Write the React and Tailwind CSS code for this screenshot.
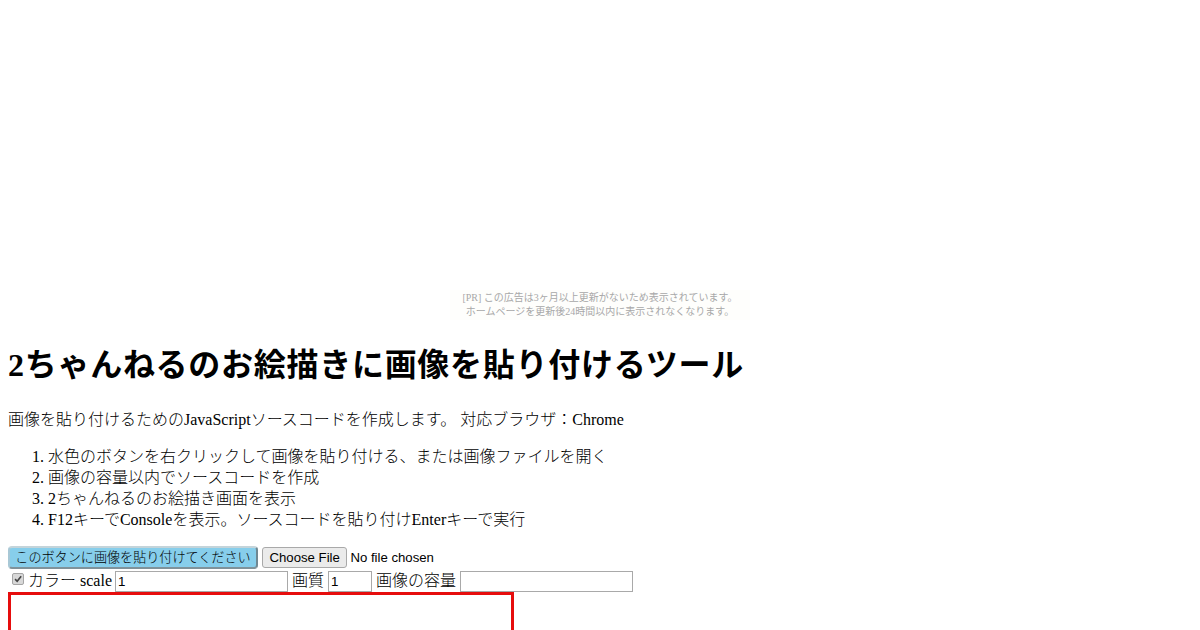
import React from "react"

const serif = "font-['Liberation_Serif','Noto_Sans_CJK_JP',serif]"
const steps = [
  "水色のボタンを右クリックして画像を貼り付ける、または画像ファイルを開く",
  "画像の容量以内でソースコードを作成",
  "2ちゃんねるのお絵描き画面を表示",
  "F12キーでConsoleを表示。ソースコードを貼り付けEnterキーで実行",
]

const Field = ({ className, value }) => (
  <input
    readOnly
    defaultValue={value}
    className={`h-[21px] border border-[#a9a9a9] bg-white px-[2px] font-['Liberation_Sans','Noto_Sans_CJK_JP',sans-serif] text-[13.33px] text-black ${className}`}
  />
)

const App = () => {
  return (
    <div className={`h-[630px] w-[1200px] overflow-hidden bg-white font-light text-black ${serif}`}>
      {/* Ad slot */}
      <div className="flex h-[320px] flex-col items-center justify-end">
        <div className="h-[30px] w-[300px] bg-[#fefefc] pt-[1px] text-center text-[10px] leading-[14px] font-normal text-[#a8a8a8]">
          <p>[PR] この広告は3ヶ月以上更新がないため表示されています。</p>
          <p>ホームページを更新後24時間以内に表示されなくなります。</p>
        </div>
      </div>

      <div className="px-2">
        <h1 className="mt-[27px] text-[32px] leading-[37px] font-bold tracking-[0.72px]">2ちゃんねるのお絵描きに画像を貼り付けるツール</h1>
        <p className="mt-[25px] text-base leading-[21px]">画像を貼り付けるためのJavaScriptソースコードを作成します。 対応ブラウザ：Chrome</p>

        <ol className="mt-[16px] list-decimal pl-10 text-base leading-[21px]">
          {steps.map((step) => (
            <li key={step}>{step}</li>
          ))}
        </ol>

        {/* Paste button and file picker */}
        <div className="mt-[16px] flex h-[23px] items-center font-['Liberation_Sans','Noto_Sans_CJK_JP',sans-serif] text-[13.2px]">
          <button className="h-[23px] w-[250px] rounded-[4px] border-2 border-t-[#c4d4da] border-r-[#6f8791] border-b-[#7f929a] border-l-[#a8c8d6] bg-[#87ceeb] text-center text-[13.1px] text-black">
            このボタンに画像を貼り付けてください
          </button>
          <input
            type="file"
            className="ml-1 w-[253px] text-[13.2px] file:mr-[3px] file:h-[21px] file:rounded-[3px] file:border file:border-[#a9a9a9] file:bg-[#ebebeb] file:px-[6.5px] file:text-[13.2px] file:text-black"
          />
        </div>

        {/* Options */}
        <div className="flex h-[23px] items-end text-base">
          <span className="mr-1 mb-[7px] ml-1 flex h-3 w-3 items-center justify-center rounded-[2px] border border-[#a5a5a5] bg-[#d8d8d8]">
            <svg viewBox="0 0 12 12" className="h-[10px] w-[10px]">
              <path d="M2.5 6.2 5 8.7 9.8 2.8" fill="none" stroke="#444" strokeWidth="2" />
            </svg>
          </span>
          <span className="self-center">カラー scale</span>
          <Field value="1" className="ml-[3px] w-[173px]" />
          <span className="ml-1 self-center">画質</span>
          <Field value="1" className="ml-1 w-[44px]" />
          <span className="ml-1 self-center">画像の容量</span>
          <Field value="" className="ml-1 w-[173px]" />
        </div>

        {/* Canvas preview */}
        <div className="h-[300px] w-[506px] border-[3px] border-[#e60d0d]" />
      </div>
    </div>
  )
}

export default App
